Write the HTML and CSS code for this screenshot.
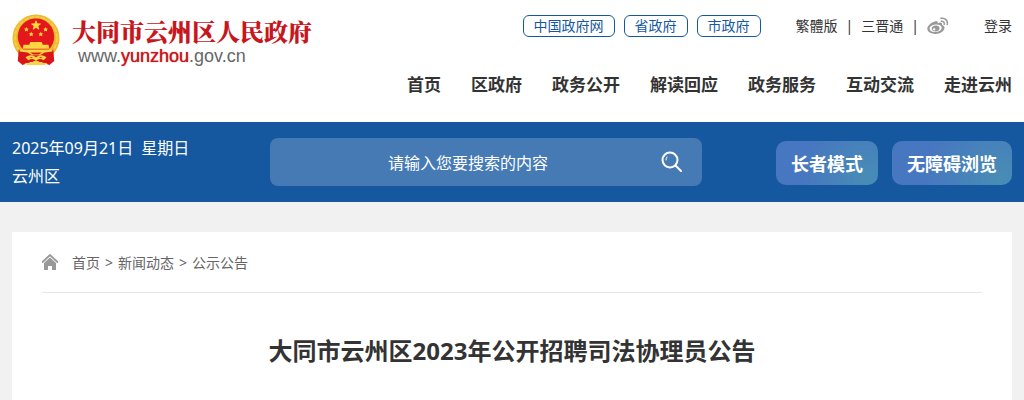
FILE: index.html
```html
<!DOCTYPE html>
<html lang="zh-CN">
<head>
<meta charset="utf-8">
<meta name="viewport" content="width=device-width, initial-scale=1">
<title>大同市云州区2023年公开招聘司法协理员公告</title>
<link rel="stylesheet" href="styles.css">
</head>
<body>
<header class="header">
  <a class="logo" href="#">
    <svg class="emblem" viewBox="0 0 50 54" aria-hidden="true">
      <circle cx="25" cy="25" r="24.5" fill="#ecb92f"/>
      <circle cx="25" cy="25" r="22" fill="none" stroke="#f5cd45" stroke-width="2" stroke-dasharray="5 1"/>
      <circle cx="25" cy="23.500" r="19" fill="#e4181c"/>
      <path d="M7 37l11 2 7 3 7-3 11-2 1 12-5 4-9-3-5 2-5-2-9 3-5-4z" fill="#d9171b"/>
      <path d="M25 7l1.200 3.200 3.400.1-2.700 2.100 1 3.300-2.900-1.900-2.900 1.900 1-3.300-2.700-2.100 3.400-.1z" fill="#fbd542" stroke="#fbd542"/>
      <g fill="#fbd542">
        <path d="M15 13.500l.8 1.500 1.700.2-1.200 1.200.3 1.700-1.600-.8-1.600.8.3-1.700-1.200-1.200 1.700-.2z"/>
        <path d="M35 13.500l.8 1.500 1.700.2-1.200 1.200.3 1.700-1.600-.8-1.600.8.3-1.700-1.200-1.200 1.700-.2z"/>
        <path d="M20 18.500l.8 1.500 1.700.2-1.200 1.200.3 1.700-1.600-.8-1.600.8.3-1.700-1.200-1.200 1.700-.2z"/>
        <path d="M30 18.500l.8 1.500 1.700.2-1.200 1.200.3 1.700-1.600-.8-1.600.8.3-1.700-1.200-1.200 1.700-.2z"/>
        <path d="M19 29h12l1 3h6l1 4H11l1-4h6z"/>
        <path d="M8 37h34v2l-8 1-5 3h-8l-5-3-8-1z"/>
        <path d="M14 45q6-4 11 0 5-4 11 0l-3 3q-5-3-8 1-3-4-8-1z"/>
        <path d="M13 51h6l4-2h4l4 2h6l-3 2H16z"/>
      </g>
      <path d="M19 40h12l-3 2h-6zM18 45h4l-2 1zM28 45h4l-2 1z" fill="#d9171b"/>
    </svg>
    <span class="logo-text">
      <span class="logo-name">大同市云州区人民政府</span>
      <span class="logo-url">www.<span class="logo-domain">yunzhou</span>.gov.cn</span>
    </span>
  </a>
  <div class="header-right">
    <div class="tools">
      <div class="pills">
        <a class="pill" href="#">中国政府网</a>
        <a class="pill" href="#">省政府</a>
        <a class="pill" href="#">市政府</a>
      </div>
      <div class="links">
        <a href="#">繁體版</a>
        <span>|</span>
        <a href="#">三晋通</a>
        <span>|</span>
        <a class="weibo" href="#" aria-label="微博">
          <svg viewBox="0 0 22 18" aria-hidden="true">
            <path fill="#999" fill-rule="evenodd" d="M8.500 4.200C10 3.800 11 4.500 10.600 6.200c2.600-1.100 5-.7 4.400 1.800 1.600.5 2.500 1.400 2.500 2.800 0 3.200-4 6.200-9 6.200-4.500 0-8.200-2-8.200-5.400C.3 8.500 5 4.900 8.500 4.200zM8.300 7.600c-3.400.3-5.900 2.100-5.700 4.300.2 2.100 3 3.400 6.400 3.100s5.900-2.300 5.700-4.400-3-3.300-6.400-3z"/>
            <path fill="#999" fill-rule="evenodd" d="M8.600 8.600c2.300-.3 4.200 1 4 2.900-.3 1.700-2.200 3-4.300 3-2.200-.1-3.900-1.500-3.600-3.200.3-1.500 2-2.600 3.900-2.700zM7.100 11.200a1.300 1.100 0 1 0 .1 2.200 1.300 1.100 0 0 0-.1-2.200z"/>
            <path fill="none" stroke="#999" stroke-width="1.500" stroke-linecap="round" d="M14 1.300c4-.9 7.200 2.300 6.200 6.300M14.300 4.200c2-.3 3.400 1.200 2.900 3"/>
          </svg>
        </a>
      </div>
      <a href="#">登录</a>
    </div>
    <nav class="nav">
      <a href="#">首页</a>
      <a href="#">区政府</a>
      <a href="#">政务公开</a>
      <a href="#">解读回应</a>
      <a href="#">政务服务</a>
      <a href="#">互动交流</a>
      <a href="#">走进云州</a>
    </nav>
  </div>
</header>
<div class="banner">
  <div class="place">
    <div class="date"><span>2025年09月21日</span><span>星期日</span></div>
    <div>云州区</div>
  </div>
  <form class="search">
    <input class="search-input" type="text" placeholder="请输入您要搜索的内容" aria-label="搜索">
    <button class="search-button" type="button" aria-label="搜索">
      <svg viewBox="0 0 22 22" aria-hidden="true">
        <g fill="none" stroke="#fff" stroke-width="2" stroke-linecap="round">
          <circle cx="9" cy="9" r="7.500"/>
          <path d="M14.500 14.500L20 20"/>
          <path d="M5 9a4 4 0 0 1 1-3" stroke-width="1"/>
        </g>
      </svg>
    </button>
  </form>
  <div class="modes">
    <button class="mode" type="button">长者模式</button>
    <button class="mode" type="button">无障碍浏览</button>
  </div>
</div>
<main class="card">
  <nav class="crumbs" aria-label="当前位置">
    <svg class="home" viewBox="0 0 16 16" aria-hidden="true">
      <path d="M0 8.500L8 1l8 7.500" fill="none" stroke="#999" stroke-width="1.800"/>
      <path d="M8 3.400l6 5.500V16h-4v-4H6v4H2V8.900z" fill="#999"/>
    </svg>
    <div class="trail">
      <a href="#">首页</a><span>&gt;</span><a href="#">新闻动态</a><span>&gt;</span><a href="#">公示公告</a>
    </div>
  </nav>
  <h1 class="title">大同市云州区2023年公开招聘司法协理员公告</h1>
</main>
</body>
</html>
```
FILE: styles.css
```css
* {
  box-sizing: border-box;
}

body {
  margin: 0;
  background: #f1f1f1;
  color: #333;
  font: 14px/20px "Noto Sans", "Noto Sans CJK SC", sans-serif;
}

a {
  color: inherit;
  text-decoration: none;
}

button,
input {
  font-family: inherit;
}

.header {
  display: flex;
  justify-content: space-between;
  padding: 14px 12px 25px;
  background: #fff;
}

.logo {
  display: flex;
  align-items: flex-start;
  gap: 12px;
}

.emblem {
  width: 48px;
  height: 52px;
}

.logo-text {
  display: flex;
  flex-direction: column;
  padding-top: 2px;
}

.logo-name {
  color: #c8161d;
  font: 900 24px/30px "Noto Serif CJK SC", "Noto Sans CJK SC", serif;
}

.logo-url {
  padding-left: 6px;
  color: #666;
  font: 18px/20px "Liberation Sans", Arial, sans-serif;
}

.logo-domain {
  color: #c8161d;
  text-shadow: 0 0 1px #c8161d;
}

.header-right {
  display: flex;
  flex-direction: column;
  align-items: flex-end;
  gap: 35px;
}

.tools,
.links,
.pills {
  display: flex;
  align-items: center;
}

.tools {
  gap: 35px;
  height: 24px;
}

.pills {
  gap: 9px;
}

.pill {
  padding: 0 10px;
  border: 1px solid #1558a0;
  border-radius: 6px;
  color: #1558a0;
}

.links {
  gap: 8px;
}

.weibo svg {
  display: block;
  width: 22px;
  height: 18px;
}

.nav {
  display: flex;
  gap: 30px;
  font-size: 17px;
  font-weight: 700;
  line-height: 24px;
}

.banner {
  display: grid;
  grid-template-columns: 258px minmax(0, 432px) 1fr;
  align-items: center;
  padding: 12px;
  background: #1558a0;
  color: #fff;
}

.place {
  font-size: 16px;
  line-height: 28px;
}

.date {
  display: flex;
  gap: 8px;
}

.search {
  display: flex;
  height: 48px;
  padding-left: 24px;
  border-radius: 8px;
  background: #467ab4;
}

.search-input {
  flex: 1;
  min-width: 0;
  padding: 2px 0 0;
  border: 0;
  outline: 0;
  background: none;
  color: #fff;
  font-size: 16px;
  text-align: center;
}

.search-input::placeholder {
  color: #fff;
  opacity: 1;
}

.search-button {
  display: flex;
  align-items: center;
  justify-content: center;
  width: 60px;
  padding: 0;
  border: 0;
  background: none;
}

.search-button svg {
  width: 22px;
  height: 22px;
}

.modes {
  display: flex;
  justify-content: flex-end;
  gap: 14px;
  padding-top: 2px;
}

.mode {
  height: 44px;
  padding: 0 15px;
  border: 0;
  border-radius: 10px;
  background: radial-gradient(circle at 90% 85%, #478db5, #4777c0 65%);
  color: #fff;
  font-size: 18px;
  font-weight: 700;
  white-space: nowrap;
}

.card {
  min-height: 168px;
  margin: 30px 12px 0;
  padding: 0 30px;
  background: #fff;
}

.crumbs {
  display: flex;
  align-items: center;
  gap: 14px;
  height: 61px;
  border-bottom: 1px solid #e6e6e6;
  color: #666;
}

.home {
  width: 16px;
  height: 16px;
}

.trail {
  display: flex;
  gap: 5px;
  padding-top: 2px;
}

.title {
  margin: 0;
  padding: 38px 0 30px;
  font-size: 24px;
  line-height: 40px;
  text-align: center;
}
```
